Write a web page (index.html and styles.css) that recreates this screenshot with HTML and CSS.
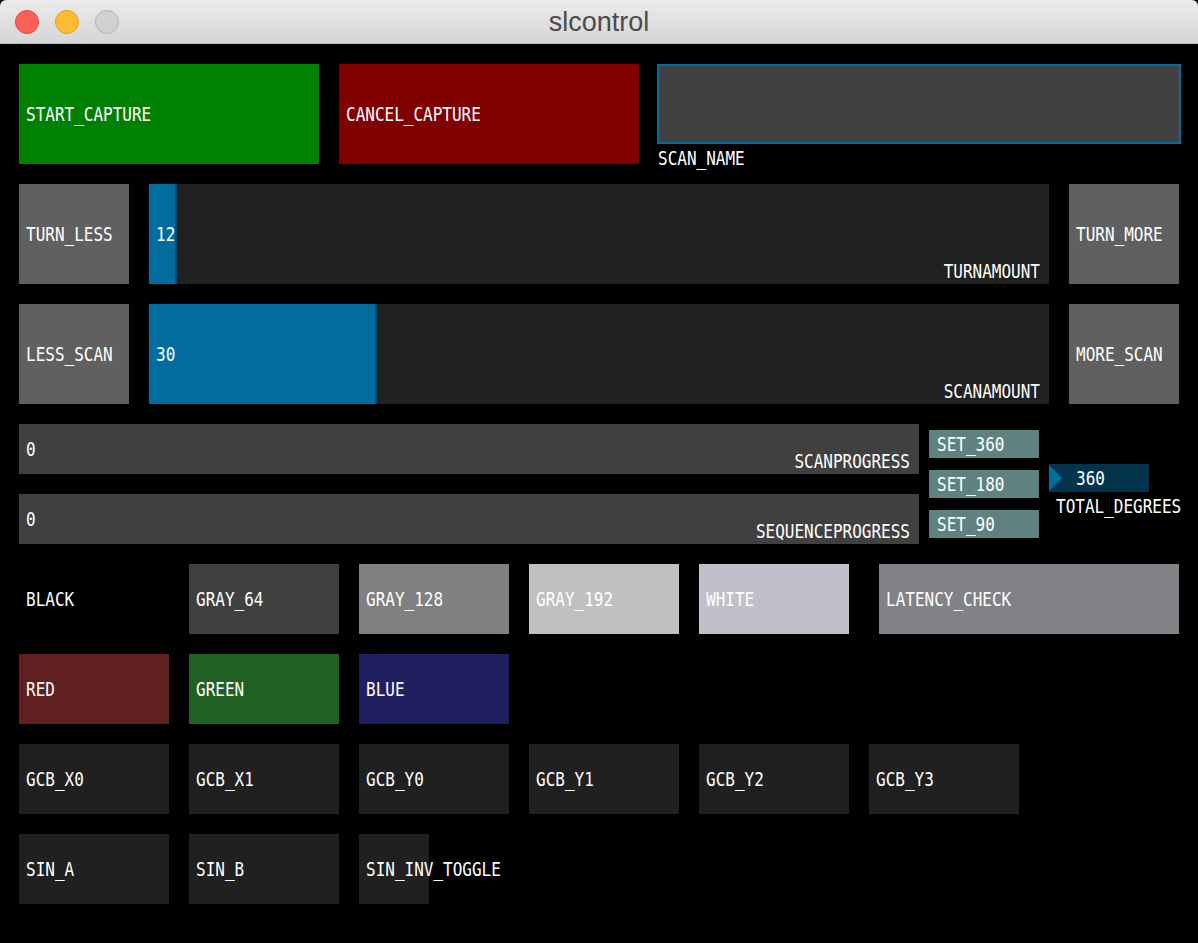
FILE: index.html
```html
<!DOCTYPE html>
<html>
<head>
<meta charset="utf-8">
<title>slcontrol</title>
<link rel="stylesheet" href="styles.css">
</head>
<body>
<div class="titlebar">
  <div class="lights">
    <span class="light close"></span>
    <span class="light min"></span>
    <span class="light zoom"></span>
  </div>
  <div class="title">slcontrol</div>
</div>
<main class="screen">
  <div class="row r1">
    <div class="btn big c-green"><span class="t">START_CAPTURE</span></div>
    <div class="btn big c-maroon"><span class="t">CANCEL_CAPTURE</span></div>
    <div class="field-wrap">
      <div class="field"></div>
      <span class="t field-label">SCAN_NAME</span>
    </div>
  </div>

  <div class="row">
    <div class="btn sq"><span class="t">TURN_LESS</span></div>
    <div class="slider">
      <div class="fill" style="width:28px"></div>
      <span class="t val">12</span>
      <span class="t lbl">TURNAMOUNT</span>
    </div>
    <div class="btn sq"><span class="t">TURN_MORE</span></div>
  </div>

  <div class="row">
    <div class="btn sq"><span class="t">LESS_SCAN</span></div>
    <div class="slider">
      <div class="fill" style="width:228px"></div>
      <span class="t val">30</span>
      <span class="t lbl">SCANAMOUNT</span>
    </div>
    <div class="btn sq"><span class="t">MORE_SCAN</span></div>
  </div>

  <div class="row r4">
    <div class="progress-col">
      <div class="progress">
        <span class="t val">0</span>
        <span class="t lbl">SCANPROGRESS</span>
      </div>
      <div class="progress">
        <span class="t val">0</span>
        <span class="t lbl">SEQUENCEPROGRESS</span>
      </div>
    </div>
    <div class="set-col">
      <div class="btn set"><span class="t">SET_360</span></div>
      <div class="btn set"><span class="t">SET_180</span></div>
      <div class="btn set"><span class="t">SET_90</span></div>
    </div>
    <div class="num-col">
      <div class="numbox">
        <svg class="arrow" width="13" height="26" viewBox="0 0 13 26"><polygon points="0,0 13,13 0,26" fill="#016c9e"/></svg>
        <span class="t numval">360</span>
      </div>
      <span class="t num-label">TOTAL_DEGREES</span>
    </div>
  </div>

  <div class="row">
    <div class="btn wide c-black"><span class="t">BLACK</span></div>
    <div class="btn wide c-g64"><span class="t">GRAY_64</span></div>
    <div class="btn wide c-g128"><span class="t">GRAY_128</span></div>
    <div class="btn wide c-g192"><span class="t">GRAY_192</span></div>
    <div class="btn wide c-white"><span class="t">WHITE</span></div>
    <div class="btn latency"><span class="t">LATENCY_CHECK</span></div>
  </div>

  <div class="row">
    <div class="btn wide c-red"><span class="t">RED</span></div>
    <div class="btn wide c-grn"><span class="t">GREEN</span></div>
    <div class="btn wide c-blu"><span class="t">BLUE</span></div>
  </div>

  <div class="row">
    <div class="btn wide c-dark"><span class="t">GCB_X0</span></div>
    <div class="btn wide c-dark"><span class="t">GCB_X1</span></div>
    <div class="btn wide c-dark"><span class="t">GCB_Y0</span></div>
    <div class="btn wide c-dark"><span class="t">GCB_Y1</span></div>
    <div class="btn wide c-dark"><span class="t">GCB_Y2</span></div>
    <div class="btn wide c-dark"><span class="t">GCB_Y3</span></div>
  </div>

  <div class="row">
    <div class="btn wide c-dark"><span class="t">SIN_A</span></div>
    <div class="btn wide c-dark"><span class="t">SIN_B</span></div>
    <div class="btn toggle c-dark"><span class="t">SIN_INV_TOGGLE</span></div>
  </div>
</main>
</body>
</html>
```

FILE: styles.css
```css
html, body {
  margin: 0;
  padding: 0;
  background: #000;
  width: 1198px;
  height: 943px;
  overflow: hidden;
}

.titlebar {
  height: 43px;
  border-bottom: 1px solid #b9b9b9;
  background: linear-gradient(#ebebeb, #d5d5d5);
  border-radius: 6px 6px 0 0;
  display: flex;
  align-items: center;
  justify-content: center;
  position: relative;
}

.lights {
  position: absolute;
  left: 15px;
  top: 10px;
  display: flex;
  gap: 16px;
}

.light {
  width: 24px;
  height: 24px;
  border-radius: 50%;
  box-sizing: border-box;
}
.light.close { background: #fe5f57; border: 1px solid #e0443e; }
.light.min { background: #febc2e; border: 1px solid #dea123; }
.light.zoom { background: #d1d1d1; border: 1px solid #b4b4b4; }

.title {
  font-family: "Liberation Sans", Arial, sans-serif;
  font-size: 27px;
  line-height: 43px;
  padding-top: 1px;
  color: #4b4b4b;
}

.screen {
  padding: 20px 0 0 19px;
  display: flex;
  flex-direction: column;
  gap: 20px;
}

.row {
  display: flex;
  gap: 20px;
  align-items: flex-start;
}

.t {
  font-family: "DejaVu Sans Mono", "Liberation Mono", monospace;
  font-size: 16px;
  line-height: 16px;
  color: #fff;
  display: inline-block;
  white-space: nowrap;
  transform: scaleY(1.2);
}

.btn {
  display: flex;
  align-items: center;
  padding: 2px 0 0 7px;
  box-sizing: border-box;
  flex: none;
}

.big { width: 300px; height: 100px; }
.sq { width: 110px; height: 100px; background: #606060; }
.wide { width: 150px; height: 70px; padding-top: 1px; }
.toggle { width: 70px; height: 70px; padding-top: 1px; overflow: visible; }
.latency { width: 300px; height: 70px; padding-top: 1px; margin-left: 10px; background: #828186; }
.set { width: 110px; height: 28px; background: #5f8280; padding: 1px 0 0 8px; }

.c-green { background: #008000; }
.c-maroon { background: #800000; }
.c-black { background: #000; }
.c-g64 { background: #404040; }
.c-g128 { background: #808080; }
.c-g192 { background: #c0c0c0; }
.c-white { background: #c0c0ca; }
.c-red { background: #602020; }
.c-grn { background: #206020; }
.c-blu { background: #202060; }
.c-dark { background: #202020; }

.r1 { height: 100px; }

.field-wrap {
  margin-left: -2px;
  display: flex;
  flex-direction: column;
  align-items: flex-start;
}

.field {
  width: 524px;
  height: 80px;
  box-sizing: border-box;
  border: 2px solid #016c9e;
  background: #414141;
}

.field-label { margin: 7px 0 0 1px; }

.slider {
  width: 900px;
  height: 100px;
  background: #212121;
  display: grid;
  flex: none;
}

.slider > *, .progress > * { grid-area: 1 / 1; }

.fill {
  justify-self: start;
  height: 100%;
  background: #016c9e;
  border-right: 2px solid #00507a;
  box-sizing: border-box;
}

.val {
  align-self: center;
  justify-self: start;
  margin: 1px 0 0 7px;
}

.lbl {
  align-self: end;
  justify-self: end;
  margin: 0 9px 4px 0;
}

.r4 { gap: 10px; }

.progress-col {
  display: flex;
  flex-direction: column;
  gap: 20px;
}

.progress {
  width: 900px;
  height: 50px;
  background: #404040;
  display: grid;
}

.set-col {
  padding-top: 6px;
  display: flex;
  flex-direction: column;
  gap: 12px;
}

.num-col {
  padding-top: 40px;
  display: flex;
  flex-direction: column;
  align-items: flex-start;
}

.numbox {
  width: 100px;
  height: 28px;
  background: #02344d;
  display: flex;
  align-items: center;
}

.arrow { display: block; flex: none; }

.numval { margin: 1px 0 0 14px; }

.num-label { margin: 7px 0 0 7px; }
```
